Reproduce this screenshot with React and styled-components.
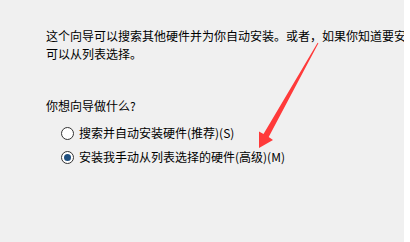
import React from 'react';
import styled, { createGlobalStyle } from 'styled-components';

const GlobalStyle = createGlobalStyle`
  html, body {
    margin: 0;
    padding: 0;
    background: #ffffff;
  }
  body {
    font-family: 'Noto Sans CJK SC', 'Noto Sans', sans-serif;
  }
`;

const Panel = styled.div`
  position: relative;
  width: 404px;
  height: 242px;
  box-sizing: border-box;
  padding: 27px 0 0 46px;
  background: #f0f0f0;
  overflow: hidden;
  color: #000;
  font-size: 12px;
  line-height: 18px;
`;

const Line = styled.div`
  white-space: nowrap;
`;

const Question = styled.div`
  margin-top: ${(p) => p.$top || 0}px;
  white-space: nowrap;
`;

const Options = styled.div`
  display: flex;
  flex-direction: column;
  gap: 6px;
  margin-top: 9px;
  padding-left: 15px;
`;

const Option = styled.label`
  display: flex;
  align-items: center;
  gap: 5px;
  height: 18px;
  white-space: nowrap;
`;

const Radio = styled.span`
  position: relative;
  width: 13px;
  height: 13px;
  box-sizing: border-box;
  border: 1px solid #333;
  border-radius: 50%;
  background: #fff;
  flex: none;

  &::after {
    content: '';
    display: ${(p) => (p.$checked ? 'block' : 'none')};
    position: absolute;
    left: 2px;
    top: 2px;
    width: 7px;
    height: 7px;
    border-radius: 50%;
    background: #1f4f7f;
  }
`;

const Arrow = styled.svg`
  position: absolute;
  left: 0;
  top: 0;
  pointer-events: none;
`;

export default function App() {
  return (
    <>
      <GlobalStyle />
      <Panel>
        <Line>这个向导可以搜索其他硬件并为你自动安装。或者，如果你知道要安装的硬件型号，</Line>
        <Line>可以从列表选择。</Line>
        <Question $top={34}>你想向导做什么?</Question>
        <Options>
          <Option>
            <Radio />
            搜索并自动安装硬件(推荐)(S)
          </Option>
          <Option>
            <Radio $checked />
            安装我手动从列表选择的硬件(高级)(M)
          </Option>
        </Options>
        <Arrow width="404" height="242" viewBox="0 0 404 242">
          <polygon
            points="259,148 259,131.5 263.5,134 317.6,42.8 318.4,43.2 268.7,137 273,140"
            fill="#ff3a3a"
          />
        </Arrow>
      </Panel>
    </>
  );
}
